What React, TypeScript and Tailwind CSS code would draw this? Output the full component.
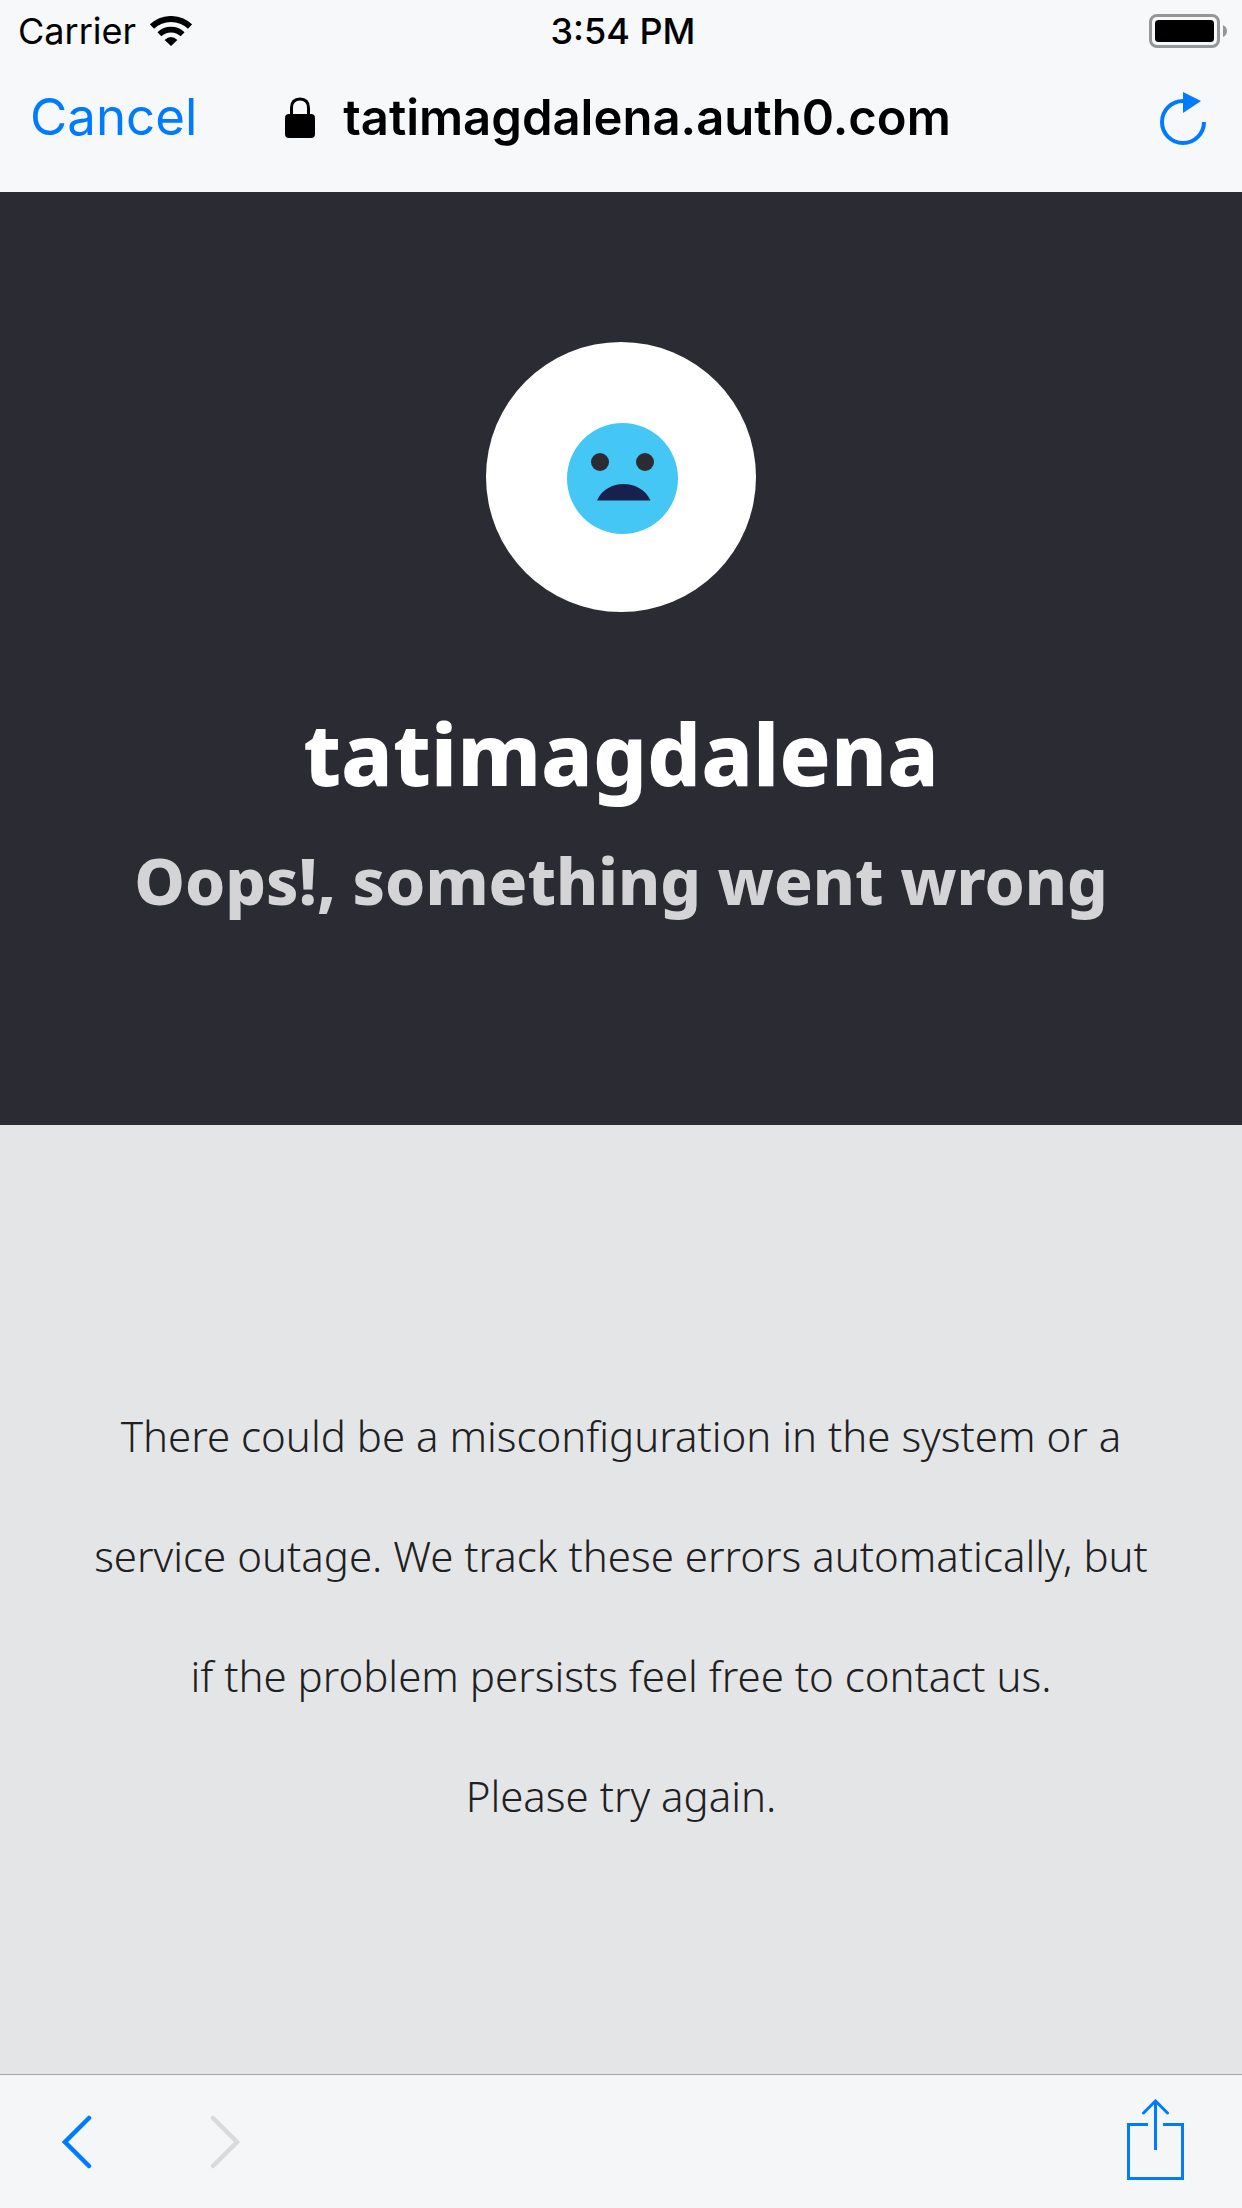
import React from "react";

function WifiIcon() {
  return (
    <svg width="42" height="30" viewBox="0 0 42 30" aria-hidden="true">
      <g fill="none" stroke="#000">
        <path d="M2 10.6A27.5 27.5 0 0 1 40 10.6" strokeWidth="6" />
        <path d="M9.4 18.2A17 17 0 0 1 32.6 18.2" strokeWidth="5.6" />
      </g>
      <path d="M14.6 24Q21 18 27.4 24L21 30Z" />
    </svg>
  );
}

function BatteryIcon() {
  return (
    <svg width="79" height="34" viewBox="0 0 79 34" role="img" aria-label="Battery full">
      <rect x="1.5" y="1.5" width="68" height="31" rx="6.5" fill="none" stroke="#949697" strokeWidth="3" />
      <rect x="6" y="6" width="59" height="22" rx="3.5" />
      <path d="M74 11Q78 13 78 17T74 23Z" fill="#949697" />
    </svg>
  );
}

function LockIcon() {
  return (
    <svg width="30" height="42" viewBox="0 0 30 42" aria-hidden="true">
      <path d="M6.5 19V11Q6.5 2 15 2T23.5 11V19" fill="none" stroke="#000" strokeWidth="3" />
      <rect y="17" width="30" height="24" rx="4" />
    </svg>
  );
}

function ReloadIcon() {
  return (
    <svg width="46" height="54" viewBox="0 0 46 54" aria-hidden="true">
      <path d="M23 10A21 21 0 1 0 44 31" fill="none" stroke="currentColor" strokeWidth="4" />
      <path d="M23 1L41 10L23 22Z" fill="currentColor" />
    </svg>
  );
}

function ChevronIcon({ forward = false }: { forward?: boolean }) {
  return (
    <svg width="30" height="54" viewBox="0 0 30 54" aria-hidden="true">
      <path
        d={forward ? "M3 3L27 27L3 51" : "M27 3L3 27L27 51"}
        fill="none"
        stroke="currentColor"
        strokeWidth="4.5"
        strokeLinecap="round"
      />
    </svg>
  );
}

function ShareIcon() {
  return (
    <svg width="57" height="81" viewBox="0 0 57 81" fill="none" stroke="currentColor" strokeWidth="3" aria-hidden="true">
      <path d="M21 25.5H1.5V79.5H55.5V25.5H36" />
      <path d="M28.5 51V3" />
      <path d="M16.5 14L28.5 2L40.5 14" strokeLinecap="round" />
    </svg>
  );
}

function SadFace() {
  return (
    <svg width="270" height="270" viewBox="0 0 270 270" role="img" aria-label="Sad face">
      <circle cx="135" cy="135" r="135" fill="#fff" />
      <circle cx="136.5" cy="136.5" r="55.5" fill="#44c7f4" />
      <circle cx="114" cy="120" r="9" fill="#2c2b34" />
      <circle cx="159" cy="120" r="9" fill="#2c2b34" />
      <path d="M111 158.500C120 136.500 155 136.500 164.500 158.500Z" fill="#16214d" />
    </svg>
  );
}

export default function App() {
  return (
    <div className="flex min-h-screen flex-col bg-[#e4e5e7] font-['Inter',sans-serif]">
      <header className="bg-[#f6f8fa] text-black">
        <div className="grid h-[62px] grid-cols-3 items-center pl-[18px] pr-[14px] text-[36px] leading-[60px]">
          <div className="flex items-center gap-[14px]">
            <span>Carrier</span>
            <WifiIcon />
          </div>
          <time className="text-center font-medium">3:54 PM</time>
          <div className="flex justify-end">
            <BatteryIcon />
          </div>
        </div>
        <nav className="grid h-[130px] grid-cols-[1fr_auto_1fr] items-start pl-[30px] pr-9 pt-[22px]">
          <button type="button" className="justify-self-start text-[51px] leading-[66px] text-[#007aff]">
            Cancel
          </button>
          <div className="flex items-center gap-7">
            <LockIcon />
            <span className="text-[49px] font-semibold leading-[68px]">tatimagdalena.auth0.com</span>
          </div>
          <button type="button" aria-label="Reload" className="flex h-[68px] items-center justify-self-end text-[#007aff]">
            <ReloadIcon />
          </button>
        </nav>
      </header>

      <main className="flex flex-1 flex-col text-center font-['Noto_Sans','Lato',sans-serif]">
        <section className="flex flex-col items-center bg-[#2b2b33] px-8 pt-[150px] pb-[186px] font-extrabold">
          <SadFace />
          <h1 className="mt-[81px] text-[85px] leading-[120px] text-white">tatimagdalena</h1>
          <h2 className="mt-[9px] text-[64px] leading-[117px] text-[#d4d4d6]">
            Oops!, something went wrong
          </h2>
        </section>
        <section className="flex flex-1 flex-col items-center justify-center px-[90px] pt-8 text-[42px] font-light leading-[120px] text-[#202022]">
          <p>
            There could be a misconfiguration in the system or a service outage. We track these errors
            automatically, but if the problem persists feel free to contact us.
          </p>
          <p>Please try again.</p>
        </section>
      </main>

      <footer className="flex h-[134px] items-center justify-between border-t border-[#a0a2a4] bg-[#f4f6f8] px-[58px]">
        <div className="flex gap-[114px]">
          <button type="button" aria-label="Back" className="px-1 text-[#007aff]">
            <ChevronIcon />
          </button>
          <button type="button" aria-label="Forward" disabled className="text-[#d9dadb]">
            <ChevronIcon forward />
          </button>
        </div>
        <button type="button" aria-label="Share" className="pb-1 text-[#007aff]">
          <ShareIcon />
        </button>
      </footer>
    </div>
  );
}
